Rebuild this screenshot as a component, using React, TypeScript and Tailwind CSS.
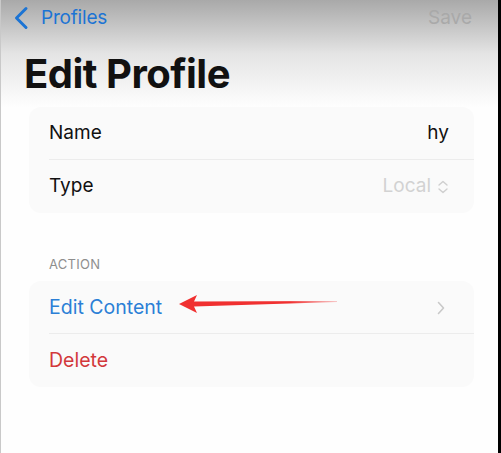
import React from 'react';

const Row: React.FC<{ children: React.ReactNode; divider?: boolean }> = ({ children, divider }) => (
  <div className="flex h-[53px] items-center pl-[20px] pr-[25px] relative">
    {children}
    {divider && <div className="absolute bottom-0 left-[20px] right-0 h-px bg-[#ececec]" />}
  </div>
);

export default function App() {
  return (
    <div className="relative h-[453px] w-[501px] overflow-hidden border-l border-l-[#c9c9c9] border-r-[3px] border-r-black bg-[#fefefe] font-['Inter','Noto_Sans',sans-serif]">
      {/* Header */}
      <div className="bg-linear-to-b from-[#a9a9a9] via-[#e4e4e4] via-50% to-[#fefefe] pb-[9px]">
        <div className="flex h-[36px] items-center justify-between pl-[12px] pr-[26px]">
          <div className="flex items-center gap-[11px] text-[#1c74d4]">
            <svg width="17" height="24" viewBox="0 0 17 24" fill="none">
              <path d="M13 2.5 L3.5 12 L13 21.5" stroke="#1c74d4" strokeWidth="3" strokeLinecap="round" strokeLinejoin="round" />
            </svg>
            <span className="text-[19px] tracking-[-0.2px]">Profiles</span>
          </div>
          <span className="text-[19px] text-[#a9a9a9]">Save</span>
        </div>
        <h1 className="pl-[23px] pt-[14px] text-[40px] font-bold leading-[48px] tracking-[-0.5px] text-[#111]">Edit Profile</h1>
      </div>

      {/* Profile card */}
      <div className="ml-[28px] mr-[24px] rounded-[12px] bg-[#fafafa] text-[19px] text-[#111]">
        <Row divider>
          <span className="flex-1">Name</span>
          <span>hy</span>
        </Row>
        <Row>
          <span className="flex-1">Type</span>
          <span className="text-[#d2d2d2]">Local</span>
          <svg className="ml-[6px]" width="12" height="16" viewBox="0 0 12 16" fill="none">
            <path d="M2 6 L6 2.5 L10 6 M2 10 L6 13.5 L10 10" stroke="#cfcfcf" strokeWidth="1.4" strokeLinecap="round" strokeLinejoin="round" />
          </svg>
        </Row>
      </div>

      <div className="pl-[48px] pt-[43px] pb-[9px] text-[13px] leading-[16px] tracking-[0.3px] text-[#8e8e8e]">ACTION</div>

      {/* Action card */}
      <div className="ml-[28px] mr-[24px] rounded-[12px] bg-[#fafafa] text-[19.5px]">
        <Row divider>
          <span className="flex-1 text-[#2b7fd6]">Edit Content</span>
          <svg className="mr-[3px]" width="10" height="16" viewBox="0 0 10 16" fill="none">
            <path d="M2.5 2.5 L7.5 8 L2.5 13.5" stroke="#c9c9c9" strokeWidth="1.6" strokeLinecap="round" strokeLinejoin="round" />
          </svg>
        </Row>
        <Row>
          <span className="text-[#d2383a]">Delete</span>
        </Row>
      </div>

      {/* Annotation arrow */}
      <svg className="absolute left-[176px] top-[292px]" width="162" height="22" viewBox="0 0 162 22">
        <defs>
          <linearGradient id="tail" x1="0" x2="1" y1="0" y2="0">
            <stop offset="0.7" stopColor="#f03030" />
            <stop offset="1" stopColor="#f03030" stopOpacity="0.25" />
          </linearGradient>
        </defs>
        <path d="M2 12 L20 3 L17 9.5 L160 9 L160 10 L17 14.5 L20 21 Z" fill="url(#tail)" />
      </svg>
    </div>
  );
}
